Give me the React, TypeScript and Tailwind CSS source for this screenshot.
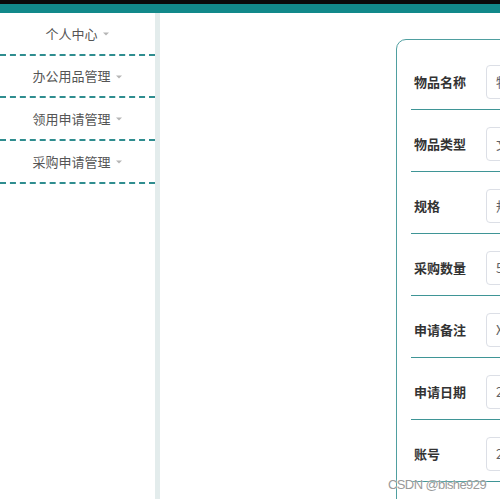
import React from "react";

const menus = ["个人中心", "办公用品管理", "领用申请管理", "采购申请管理"];
const rows: [string, string][] = [
  ["物品名称", "物品名称"],
  ["物品类型", "文具用品"],
  ["规格", "规格型号"],
  ["采购数量", "50"],
  ["申请备注", "XXXX"],
  ["申请日期", "2023-03-01"],
  ["账号", "2023001"],
  ["姓名", "张三"],
];

export default function App() {
  return (
    <div
      className="relative w-[500px] h-[499px] overflow-hidden bg-white flex flex-col"
      style={{ fontFamily: '"Noto Sans CJK SC", "Liberation Sans", sans-serif' }}
    >
      <div className="h-[4px] bg-[#0a0a0a] shrink-0" />
      <div className="h-[9px] bg-[#12898a] shrink-0" />
      <div className="flex flex-1 min-h-0">
        <div className="w-[155px] shrink-0 flex flex-col">
          {menus.map((m) => (
            <div
              key={m}
              className="h-[42.7px] shrink-0 flex items-center justify-center border-b-2 border-dashed border-[#2f8d8f] text-[13px] text-[#555]"
            >
              <span>{m}</span>
              <svg width="8" height="8" viewBox="0 0 8 8" className="ml-[4px] mt-[1px]">
                <path d="M1 2.5 L7 2.5 L4 5.5 Z" fill="#b5b5b5" />
              </svg>
            </div>
          ))}
        </div>
        <div className="w-[5px] shrink-0 bg-[#e3ecec]" />
        <div className="flex-1 min-w-0 pl-[236px] pt-[26px]">
          <div className="w-[400px] border border-[#4f9fa0] rounded-[10px] pt-[8px] pl-[14px] pr-[14px]">
            {rows.map(([label, value]) => (
              <div
                key={label}
                className="h-[62px] flex items-start pt-[17px] border-b border-[#3f9596]"
              >
                <div className="w-[75px] pl-[3px] h-[34px] flex items-center text-[13px] font-bold text-[#333]">
                  {label}
                </div>
                <div className="w-[200px] h-[34px] border border-[#dcdfe6] rounded-[4px] flex items-center pl-[9px] text-[13px] text-[#606266]">
                  {value}
                </div>
              </div>
            ))}
          </div>
        </div>
      </div>
      <div
        className="absolute left-[388px] top-[478px] leading-none text-[13px] text-[#9a9a9a] tracking-[-0.6px]"
        style={{ fontFamily: '"Liberation Sans", sans-serif', textShadow: "0 0 2px #fff" }}
      >
        CSDN @bishe929
      </div>
    </div>
  );
}
